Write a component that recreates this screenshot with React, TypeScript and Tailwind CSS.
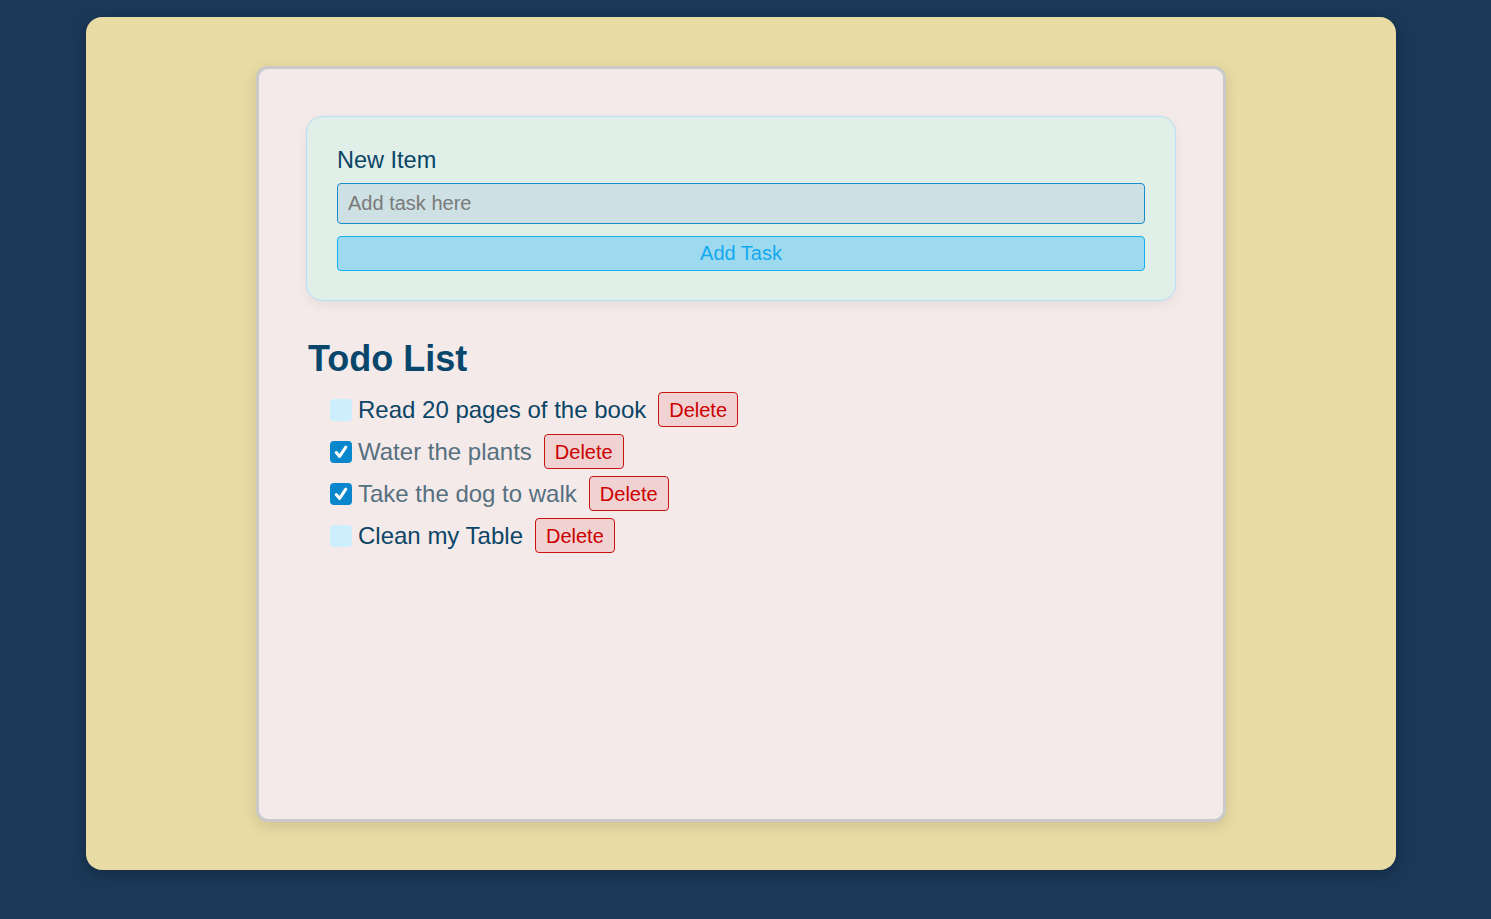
import { useState } from "react";

const initial = [
  { id: 1, text: "Read 20 pages of the book", done: false },
  { id: 2, text: "Water the plants", done: true },
  { id: 3, text: "Take the dog to walk", done: true },
  { id: 4, text: "Clean my Table", done: false },
];

export default function App() {
  const [tasks, setTasks] = useState(initial);
  const [draft, setDraft] = useState("");

  const add = () => {
    if (!draft.trim()) return;
    setTasks([...tasks, { id: Date.now(), text: draft, done: false }]);
    setDraft("");
  };

  return (
    <div className="min-h-[919px] bg-[#1a3858] pt-[17px] pl-[86px] font-['Liberation_Sans',Arial,sans-serif]">
      <div className="w-[1310px] h-[853px] bg-[#e9dba4] rounded-2xl shadow-[0_4px_14px_rgba(0,0,0,0.25)] pt-[49px] flex justify-center">
        <div className="w-[970px] h-[756px] bg-[#f4eaea] border-[3px] border-[#c9c9c9] rounded-xl shadow-[0_4px_14px_rgba(0,0,0,0.12)] p-[47px]">
          <div className="bg-[#e0efe8] border border-[#b5e0f5] rounded-2xl shadow-[0_4px_12px_rgba(0,0,0,0.06)] px-[30px] pt-[29px] pb-[29px]">
            <label className="block text-[23.5px] leading-[28px] text-[#0b4566] mb-[9px]">New Item</label>
            <input
              value={draft}
              onChange={(e) => setDraft(e.target.value)}
              placeholder="Add task here"
              className="w-full h-[41px] bg-[#cde0e3] border border-[#1a8cc8] rounded-[4px] px-[10px] text-[20px] text-[#0b4566] placeholder:text-[#7a7a7a] outline-none"
            />
            <button
              onClick={add}
              className="mt-[12px] w-full h-[35px] bg-[#9ddaf0] border border-[#14b0f0] rounded-[4px] text-[20px] leading-[33px] text-[#14a8ee]"
            >
              Add Task
            </button>
          </div>

          <h2 className="mt-[36px] ml-[2px] text-[36px] leading-[44px] font-bold text-[#08476b]">Todo List</h2>

          <ul className="mt-[11px] pl-[24px] flex flex-col gap-[7px]">
            {tasks.map((t) => (
              <li key={t.id} className="flex items-center h-[35px]">
                <button
                  onClick={() => setTasks(tasks.map((x) => (x.id === t.id ? { ...x, done: !x.done } : x)))}
                  className={`w-[22px] h-[22px] rounded-[4px] flex items-center justify-center ${t.done ? "bg-[#0a86cc]" : "bg-[#cdeefc]"}`}
                >
                  {t.done && (
                    <svg width="16" height="16" viewBox="0 0 16 16" fill="none">
                      <path d="M3.2 8.6 L6.6 12.4 L12.8 3.2" stroke="white" strokeWidth="3" strokeLinecap="round" strokeLinejoin="round" />
                    </svg>
                  )}
                </button>
                <span className={`ml-[6px] text-[24px] leading-[30px] ${t.done ? "text-[#56707f]" : "text-[#0b4566]"}`}>{t.text}</span>
                <button
                  onClick={() => setTasks(tasks.filter((x) => x.id !== t.id))}
                  className="ml-[12px] h-[35px] px-[10px] bg-[#f0d2d2] border border-[#cc1111] rounded-[4px] text-[20px] leading-[32px] text-[#cc0000]"
                >
                  Delete
                </button>
              </li>
            ))}
          </ul>
        </div>
      </div>
    </div>
  );
}
